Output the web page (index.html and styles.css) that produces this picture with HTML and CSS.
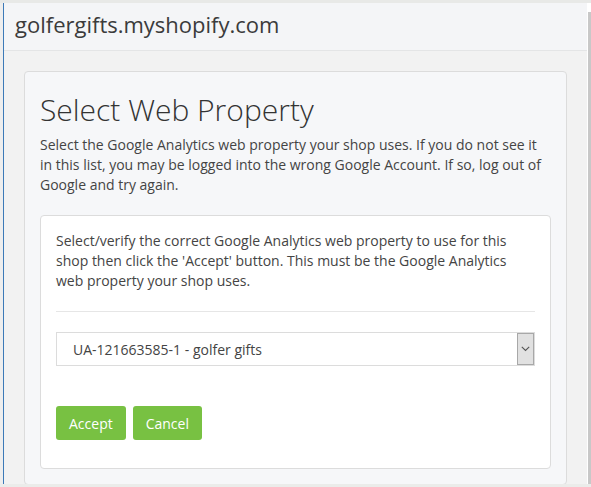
FILE: index.html
```html
<!DOCTYPE html>
<html lang="en">
<head>
<meta charset="utf-8">
<title>Select Web Property</title>
<link rel="stylesheet" href="styles.css">
</head>
<body>
<div class="topstrip"></div>
<div class="window">
  <div class="leftedge"></div>
  <div class="main">
    <header class="header">
      <h1 class="shop">golfergifts.myshopify.com</h1>
    </header>
    <div class="content">
      <section class="card">
        <h2 class="title">Select Web Property</h2>
        <p class="lead">Select the Google Analytics web property your shop uses. If you do not see it in this list, you may be logged into the wrong Google Account. If so, log out of Google and try again.</p>
        <div class="panel">
          <p class="panel-text">Select/verify the correct Google Analytics web property to use for this shop then click the 'Accept' button. This must be the Google Analytics web property your shop uses.</p>
          <hr class="divider">
          <div class="select">
            <span class="select-value">UA-121663585-1 - golfer gifts</span>
            <span class="select-arrow">
              <svg width="9" height="6" viewBox="0 0 9 6"><path d="M0.8 0.8 L4.5 4.5 L8.2 0.8" fill="none" stroke="#555" stroke-width="1.1"/></svg>
            </span>
          </div>
          <div class="actions">
            <button class="btn">Accept</button>
            <button class="btn">Cancel</button>
          </div>
        </div>
      </section>
    </div>
  </div>
  <div class="scrollbar"><div class="thumb"></div></div>
</div>
<div class="bottomstrip"></div>
</body>
</html>
```

FILE: styles.css
```css
* { box-sizing: border-box; }
html, body { margin: 0; padding: 0; }
body {
  width: 591px;
  height: 487px;
  overflow: hidden;
  display: flex;
  flex-direction: column;
  font-family: "Open Sans", "Noto Sans", sans-serif;
  background: #ebecea;
}
.topstrip { height: 3px; background: #e8e9e7; flex: none; }
.bottomstrip { height: 3px; background: #ebecea; flex: none; }
.window {
  flex: 1;
  display: flex;
  overflow: hidden;
  min-height: 0;
}
.leftedge {
  width: 4px;
  flex: none;
  background: #eeeeee;
  border-right: 1px solid #3d7ab8;
}
.main {
  flex: 1;
  background: #f2f2f2;
  display: flex;
  flex-direction: column;
  overflow: hidden;
}
.scrollbar {
  width: 4px;
  flex: none;
  background: #ffffff;
  border-left: 1px solid #ffffff;
  display: flex;
  flex-direction: column;
  padding-top: 9px;
}
.thumb { flex: 1; background: #c8c8c8; }
.header {
  height: 48px;
  flex: none;
  background: #f4f5f7;
  border-bottom: 1px solid #e4e5e6;
  padding: 0 0 0 11px;
  display: flex;
  align-items: center;
}
.shop {
  margin: 0 0 6px;
  font-size: 22px;
  font-weight: 400;
  color: #3b3b3b;
  line-height: 30px;
}
.content {
  padding: 20px 20px 0;
}
.card {
  background: #f6f7f9;
  border: 1px solid #dcdcdc;
  border-radius: 4px;
  padding: 18px 15px 15px;
}
.title {
  margin: 0;
  font-size: 30px;
  font-weight: 300;
  color: #333;
  line-height: 40px;
}
.lead {
  margin: 5px 0 20px;
  font-size: 14px;
  line-height: 20px;
  color: #444;
}
.panel {
  background: #fff;
  border: 1px solid #dcdcdc;
  border-radius: 4px;
  padding: 15px 15px 28px;
}
.panel-text {
  margin: 0;
  font-size: 14px;
  line-height: 20px;
  color: #444;
}
.divider {
  margin: 20px 0;
  border: 0;
  border-top: 1px solid #e6e6e6;
}
.select {
  height: 34px;
  border: 1px solid #dcdcdc;
  display: flex;
  align-items: center;
  justify-content: space-between;
  padding-left: 16px;
}
.select-value {
  font-size: 14px;
  color: #444;
}
.select-arrow {
  width: 17px;
  height: 32px;
  background: #e1e1e1;
  border: 1px solid #a8a8a8;
  display: flex;
  align-items: center;
  justify-content: center;
}
.actions {
  margin-top: 40px;
  display: flex;
  gap: 7px;
}
.btn {
  height: 34px;
  padding: 0 13px;
  border: 0;
  border-radius: 3px;
  background: #78c142;
  color: #fff;
  font-family: "Open Sans", "Noto Sans", sans-serif;
  font-size: 14px;
}
```
